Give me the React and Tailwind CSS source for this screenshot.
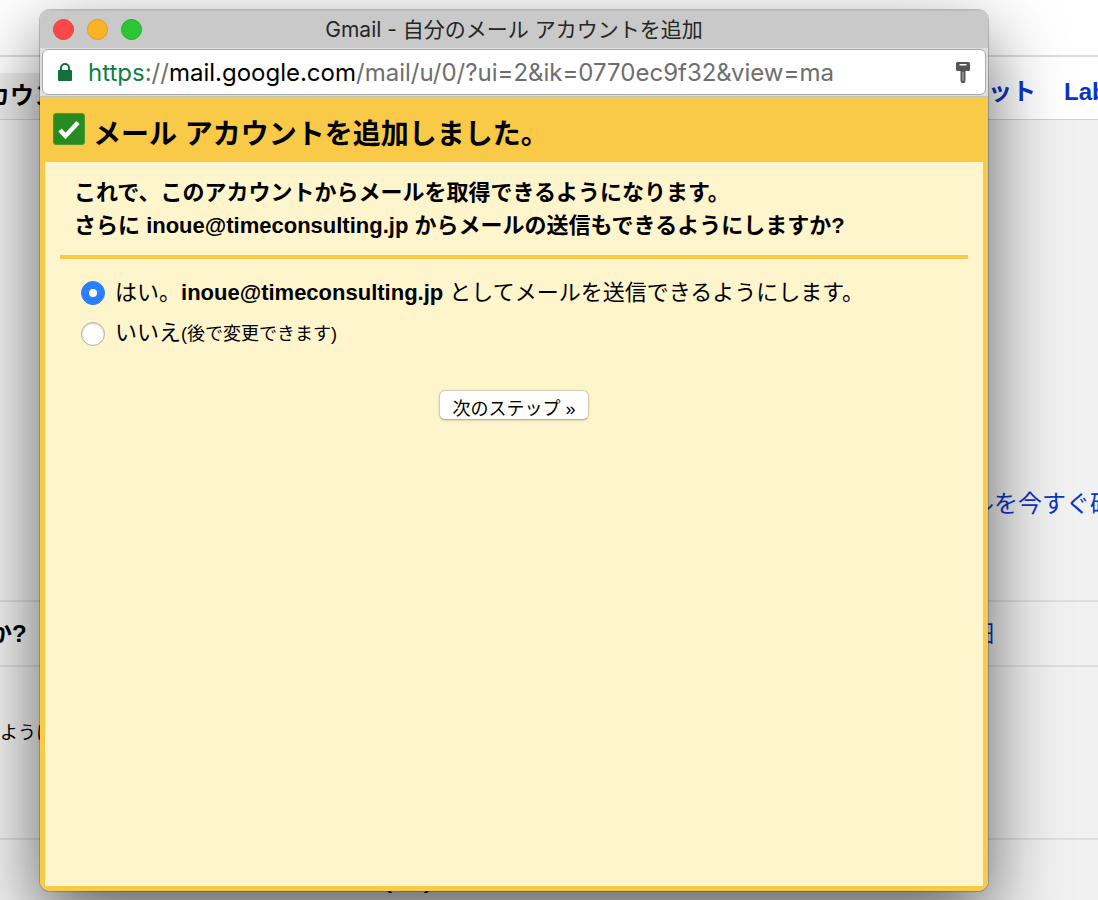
import { useState } from 'react';

const ACCOUNT = 'inoue@timeconsulting.jp';

// 背面の Gmail 設定ページ
function SettingsPage() {
  return (
    <div className="min-h-screen flex flex-col bg-[#f1f1f1] text-2xl whitespace-nowrap">
      <div className="h-[55px] bg-white" />
      <nav className="h-[65px] flex justify-between bg-white border-t-2 border-b border-t-[#dcdcdc] border-b-[#cfcfcf] font-bold">
        <div className="w-1/2 mt-4 bg-[#ececec] flex items-center overflow-hidden">
          <span className="-ml-3.5">カウン</span>
        </div>
        <div className="w-[110px] pt-2 flex items-center gap-7 overflow-hidden text-[#0a34c4]">
          <a href="#chat">ット</a>
          <a href="#labs">Labs</a>
        </div>
      </nav>
      <section className="h-[480px] flex justify-end items-end pb-20">
        <a href="#check" className="w-[128px] overflow-hidden text-[#0a34c4]">
          ルを今すぐ確
        </a>
      </section>
      <section className="h-[65px] flex justify-between items-center border-t-2 border-[#dedede]">
        <span className="-ml-3 font-bold">か?</span>
        <a href="#detail" className="w-[128px] text-[#0a34c4]">細</a>
      </section>
      <section className="h-[173px] pt-12 border-t-2 border-[#dedede]">
        <span className="text-lg">ように</span>
      </section>
      <section className="h-[62px] overflow-hidden pt-6 pl-96 flex gap-8 border-t-2 border-[#dedede] font-bold">
        <span>(</span>
        <span>)</span>
      </section>
    </div>
  );
}

function TitleBar() {
  return (
    <div className="relative h-[38px] flex items-center justify-center bg-[#c9c9c9] border-t border-[#bdbdbd]">
      <div className="absolute left-[13px] flex gap-[13px]">
        <button type="button" aria-label="閉じる" className="size-[21px] rounded-full bg-[#fc4848] border border-[#e03c3c]" />
        <button type="button" aria-label="しまう" className="size-[21px] rounded-full bg-[#fdb225] border border-[#dd991c]" />
        <button type="button" aria-label="拡大" className="size-[21px] rounded-full bg-[#2bc732] border border-[#22ab2a]" />
      </div>
      <h1 className="text-[21px] text-[#262626] whitespace-nowrap">Gmail - 自分のメール アカウントを追加</h1>
    </div>
  );
}

function AddressBar() {
  return (
    <div className="h-[49px] px-[2px] py-px bg-[#dedede] border-b border-[#c4c4c4]">
      <div className="h-full flex items-center pl-3.5 pr-3.5 bg-white border border-[#a8a8a8] rounded-md">
        <svg className="w-4 h-5 shrink-0" viewBox="0 0 16 20" aria-hidden="true">
          <path d="M4 9V6a4 4 0 0 1 8 0V9" fill="none" stroke="#12713a" strokeWidth="2" />
          <rect x="1" y="8" width="14" height="11" rx="1" fill="#12713a" />
        </svg>
        <div className="ml-[15px] pt-0.5 flex-1 text-2xl text-[#6e6e6e] whitespace-nowrap overflow-hidden">
          <span className="text-[#0c8142]">https</span>://<span className="text-black">mail.google.com</span>
          /mail/u/0/?ui=2&amp;ik=0770ec9f32&amp;view=ma
        </div>
        <button type="button" aria-label="パスワード" className="shrink-0">
          <svg className="w-4 h-6" viewBox="0 0 16 24">
            <path
              fillRule="evenodd"
              fill="#555"
              d="M2.5 2h11A1.5 1.5 0 0 1 15 3.500V9.500a1.500 1.500 0 0 1-1.500 1.500H10.500V21L9.500 23h-3L5.500 21V11H2.500A1.500 1.500 0 0 1 1 9.500V3.500A1.500 1.500 0 0 1 2.500 2zM4.500 4v1.500h7V4z"
            />
            <path d="M8 12v9" stroke="#9a9a9a" strokeWidth="1.500" />
          </svg>
        </button>
      </div>
    </div>
  );
}

function CheckBadge() {
  return (
    <svg className="size-8 shrink-0" viewBox="0 0 32 32" aria-hidden="true">
      <rect x="0.500" y="0.500" width="31" height="31" rx="2.500" fill="#288b22" stroke="#4a9b2c" />
      <path d="M7 17l5.500 6L25 9.500" fill="none" stroke="#fff" strokeWidth="4.500" />
    </svg>
  );
}

const radioClass =
  'appearance-none size-6 shrink-0 rounded-full bg-white border border-[#b3b0a0] shadow-[inset_0_1px_2px_rgba(0,0,0,0.2)] flex items-center justify-center checked:bg-[#2b7fff] checked:border-[#2b7fff] checked:shadow-none before:size-2 before:rounded-full before:bg-white';

export default function App() {
  const [canSend, setCanSend] = useState(true);

  return (
    <div className="relative min-h-screen overflow-hidden text-black font-['Liberation_Sans','Noto_Sans_CJK_JP',sans-serif]">
      <SettingsPage />

      {/* ポップアップウィンドウ */}
      <div className="absolute top-2.5 bottom-[9px] left-10 right-[110px] flex flex-col rounded-[10px] overflow-hidden shadow-[0_0_0_1px_rgba(0,0,0,0.2),0_28px_72px_rgba(0,0,0,0.6)]">
        <div className="font-['Inter','Noto_Sans_CJK_JP',sans-serif]">
          <TitleBar />
          <AddressBar />
        </div>

        <main className="flex-1 flex flex-col bg-[#f9ca48] px-[5px] pb-[5px]">
          <div className="h-[65px] flex items-center gap-2 pl-2 pb-0.5">
            <CheckBadge />
            <h2 className="text-[28px] font-bold pt-3">メール アカウントを追加しました。</h2>
          </div>

          <form onSubmit={(e) => e.preventDefault()} className="flex-1 bg-[#fef5cd] px-[15px] pt-3.5">
            <p className="px-3.5 pb-[13px] text-[22px] leading-[33px] font-bold border-b-4 border-[#f9ca48]">
              これで、このアカウントからメールを取得できるようになります。
              <br />
              さらに {ACCOUNT} からメールの送信もできるようにしますか?
            </p>

            <div className="pt-3.5 pl-[21px] text-[22px] leading-10">
              <label className="flex items-center gap-2.5">
                <input type="radio" name="send" checked={canSend} onChange={() => setCanSend(true)} className={radioClass} />
                <span>
                  はい。<b>{ACCOUNT}</b> としてメールを送信できるようにします。
                </span>
              </label>
              <label className="flex items-center gap-2.5">
                <input type="radio" name="send" checked={!canSend} onChange={() => setCanSend(false)} className={radioClass} />
                <span>
                  いいえ<span className="text-lg leading-10">(後で変更できます)</span>
                </span>
              </label>
            </div>

            <div className="mt-9 flex justify-center">
              <button
                type="submit"
                className="h-[30px] px-3 pt-1.5 text-lg leading-6 bg-white border border-[#d3ccb0] border-b-[#b5b09b] rounded-md shadow-sm whitespace-nowrap"
              >
                次のステップ »
              </button>
            </div>
          </form>
        </main>
      </div>
    </div>
  );
}
